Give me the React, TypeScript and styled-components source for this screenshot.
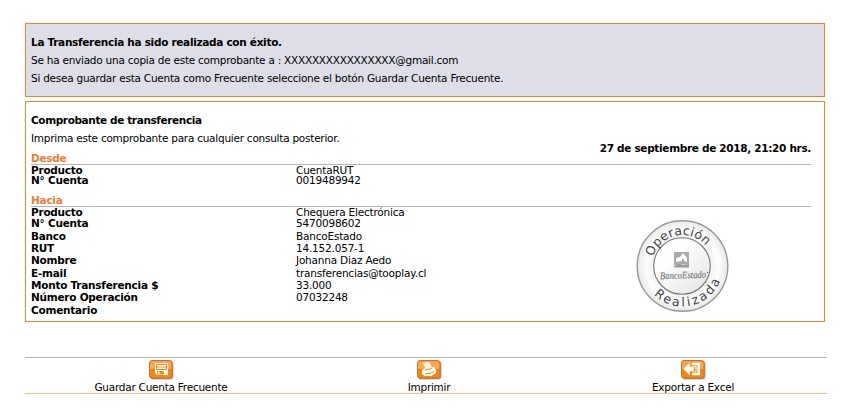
import React from "react";
import styled, { createGlobalStyle } from "styled-components";

const Global = createGlobalStyle`
  * { box-sizing: border-box; }
  body { margin: 0; background: #fff; }
`;

const Page = styled.main`
  width: 855px;
  height: 409px;
  padding: 23px 0 0 25px;
  overflow: hidden;
  font-family: Verdana, "DejaVu Sans", sans-serif;
  font-size: 10.5px;
  line-height: 12px;
  letter-spacing: -0.245px;
  color: #000;
  white-space: nowrap;
`;

const Notice = styled.section`
  width: 800px;
  height: 74px;
  padding: 9px 5px 0;
  border: 1px solid #ef8323;
  background: #dddee7;
`;

const Receipt = styled.section`
  width: 800px;
  height: 221px;
  margin-top: 4px;
  padding: 9px 5px 0;
  border: 1px solid #ef8323;
  display: flex;
  flex-direction: column;
`;

const Line = styled.p`
  margin: 0;
  height: 18px;
  line-height: 18px;
`;

const Title = styled.h2<{ $spacing: number }>`
  margin: 0;
  height: 18px;
  line-height: 18px;
  font-size: 10.5px;
  font-weight: bold;
  letter-spacing: ${(p) => p.$spacing}px;
`;

const Stamped = styled.time`
  height: 10px;
  margin-top: -5px;
  padding-right: 8px;
  align-self: flex-end;
  line-height: 12px;
  font-weight: bold;
  letter-spacing: -0.32px;
`;

const SectionHead = styled.h3<{ $top: number }>`
  width: 780px;
  height: 12px;
  margin: ${(p) => p.$top}px 0 0;
  border-bottom: 1px solid #b3b3b3;
  font-size: 10.5px;
  line-height: 11px;
  color: #f47c30;
  flex: none;
`;

const Row = styled.div<{ $height: number }>`
  display: grid;
  grid-template-columns: 265px 1fr;
  grid-template-rows: ${(p) => p.$height}px;
  align-items: end;
  line-height: 12px;
`;

const Label = styled.span`
  font-weight: bold;
`;

const Value = styled.span`
  letter-spacing: -0.2px;
`;

const Destination = styled.div`
  display: grid;
  grid-template-columns: 605px 94px;
`;

const Stamp = styled.svg`
  display: block;
  width: 94px;
  height: 94px;
  margin-top: 12px;
`;

const Toolbar = styled.nav`
  width: 802px;
  height: 37px;
  margin-top: 35px;
  border-top: 1px solid #b1b4b8;
  border-bottom: 1px solid #f6bd82;
  display: grid;
  grid-template-columns: 272px 264px 264px;
`;

const Action = styled.button`
  display: flex;
  flex-direction: column;
  align-items: center;
  padding: 0;
  border: 0;
  background: none;
  font: inherit;
  letter-spacing: inherit;
  color: inherit;
`;

const Icon = styled.svg`
  display: block;
  width: 26px;
  height: 22px;
  margin-top: 1px;
`;

const origin = [
  { label: "Producto", value: "CuentaRUT", height: 11 },
  { label: "N° Cuenta", value: "0019489942", height: 10 },
];

const target = [
  { label: "Producto", value: "Chequera Electrónica", height: 11 },
  { label: "N° Cuenta", value: "5470098602", height: 11 },
  { label: "Banco", value: "BancoEstado", height: 13 },
  { label: "RUT", value: "14.152.057-1", height: 12 },
  { label: "Nombre", value: "Johanna Diaz Aedo", height: 12 },
  { label: "E-mail", value: "transferencias@tooplay.cl", height: 13 },
  { label: "Monto Transferencia $", value: "33.000", height: 12 },
  { label: "Número Operación", value: "07032248", height: 12 },
  { label: "Comentario", value: "", height: 13 },
];

type Item = { label: string; value: string; height: number };

const Rows = ({ items }: { items: Item[] }) => (
  <div>
    {items.map((r) => (
      <Row key={r.label} $height={r.height}>
        <Label>{r.label}</Label>
        <Value>{r.value}</Value>
      </Row>
    ))}
  </div>
);

const OperationStamp = () => (
  <Stamp viewBox="0 0 94 94" aria-label="Operación Realizada">
    <defs>
      <radialGradient id="ring">
        <stop offset="0.6" stopColor="#f0f0f0" />
        <stop offset="0.8" stopColor="#fdfdfd" />
        <stop offset="1" stopColor="#e8e8e8" />
      </radialGradient>
      <linearGradient id="disc" x1="0" y1="0" x2="1" y2="1">
        <stop offset="0.3" stopColor="#fff" />
        <stop offset="1" stopColor="#e2e2e2" />
      </linearGradient>
      <path id="upper" d="M15.5 47a31 31 0 0 1 62 0" />
      <path id="lower" d="M6 47a40.5 40.5 0 0 0 81 0" />
    </defs>
    <circle cx="46.5" cy="47" r="45.3" fill="url(#ring)" stroke="#999" strokeWidth="1.4" />
    <circle cx="46" cy="47" r="28.3" fill="url(#disc)" stroke="#777" strokeWidth="1.1" />
    <g fontFamily="Verdana, DejaVu Sans, sans-serif" fontSize="12.5" letterSpacing="0" fill="#444">
      <text>
        <textPath href="#upper" startOffset="43.5%" textAnchor="middle" textLength="66">Operación</textPath>
      </text>
      <text>
        <textPath href="#lower" startOffset="56.5%" textAnchor="middle" textLength="80">Realizada</textPath>
      </text>
    </g>
    <path d="M38 33h15v12l-15 1z" fill="#aaa" />
    <path d="M40 43v-4l4-1 3-4 4 5v4l-3-1v-2h-2v2z" fill="#fff" />
    <path d="M38 47l5-2 4 1 6-1v3.5H38z" fill="#999" />
    <text
      x="24" y="59.5" fontFamily="Liberation Serif, serif" fontSize="10" fontStyle="italic"
      letterSpacing="0" fill="#777" stroke="#888" strokeWidth="0.2"
      textLength="46" lengthAdjust="spacingAndGlyphs" transform="rotate(-2 47 57)"
    >
      BancoEstado
    </text>
    <circle cx="71.5" cy="53.5" r="0.8" fill="#777" />
  </Stamp>
);

const Tile = ({ children }: { children: React.ReactNode }) => (
  <Icon viewBox="0 0 26 22">
    <defs>
      <linearGradient id="tile" x1="0" y1="0" x2="0" y2="1">
        <stop offset="0" stopColor="#f7a34c" />
        <stop offset="0.48" stopColor="#fba94f" />
        <stop offset="0.5" stopColor="#f78408" />
        <stop offset="1" stopColor="#fb8a0a" />
      </linearGradient>
    </defs>
    <rect x="2.5" y="2.5" width="23.3" height="18.5" rx="3" fill="#aaa" opacity=".5" />
    <rect x="2" y="2" width="23" height="18" rx="3" fill="#777" opacity=".7" />
    <rect x="1.5" y="1.5" width="22.5" height="17.5" rx="2.5" fill="url(#tile)" stroke="#d96b12" />
    {children}
  </Icon>
);

const SaveIcon = () => (
  <Tile>
    <path d="M7 4h13v12H9l-2-2z" fill="#fff" />
    <path d="M8.5 5.5h10v5h-10zM9 8h9" stroke="#f48718" fill="none" />
    <path d="M9 12h7v3.5H9z" fill="#f58b1e" />
    <path d="M10 12.5h1.5v3H10z" fill="#fff" />
  </Tile>
);

const PrintIcon = () => (
  <Tile>
    <path d="M6 4l7-1c2 1 1 3 3 5l-7 2c0-3-1-4-3-6z" fill="#fff3df" />
    <path d="M6 11l4-2 8-1 2 3v3l-5 3H9l-3-2z" fill="#fff" />
    <path d="M9 11l7-1.5M9 14.5h5l4-2" stroke="#ed8b28" fill="none" />
  </Tile>
);

const ExportIcon = () => (
  <Tile>
    <path d="M12 3.8h8v12.5h-8v-2.3h5.5V6H12z" fill="#fff" />
    <path d="M13 7.5h3v5.500h-3" stroke="#fff" fill="none" />
    <path d="M3 10l7-6.500v4h4v5h-4v4z" fill="#fff" stroke="#f08a2a" strokeWidth="0.4" />
  </Tile>
);

export default function App() {
  return (
    <>
      <Global />
      <Page>
        <Notice>
          <Title $spacing={-0.3}>La Transferencia ha sido realizada con éxito.</Title>
          <Line>Se ha enviado una copia de este comprobante a : XXXXXXXXXXXXXXXX@gmail.com</Line>
          <Line>Si desea guardar esta Cuenta como Frecuente seleccione el botón Guardar Cuenta Frecuente.</Line>
        </Notice>
        <Receipt>
          <Title $spacing={-0.38}>Comprobante de transferencia</Title>
          <Line>Imprima este comprobante para cualquier consulta posterior.</Line>
          <Stamped>27 de septiembre de 2018, 21:20 hrs.</Stamped>
          <SectionHead $top={1}>Desde</SectionHead>
          <Rows items={origin} />
          <SectionHead $top={9}>Hacia</SectionHead>
          <Destination>
            <Rows items={target} />
            <OperationStamp />
          </Destination>
        </Receipt>
        <Toolbar>
          <Action><SaveIcon />Guardar Cuenta Frecuente</Action>
          <Action><PrintIcon />Imprimir</Action>
          <Action><ExportIcon />Exportar a Excel</Action>
        </Toolbar>
      </Page>
    </>
  );
}
